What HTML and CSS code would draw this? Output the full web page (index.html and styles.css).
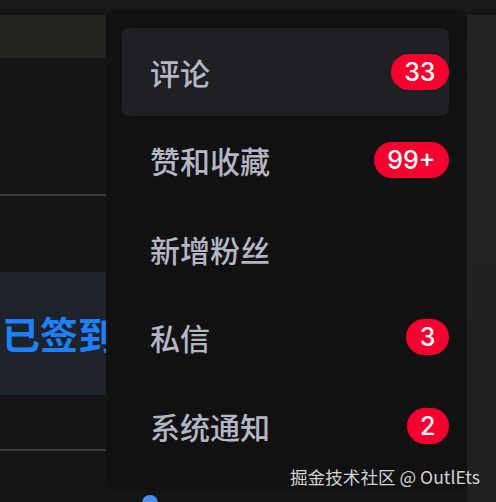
FILE: index.html
```html
<!doctype html>
<html lang="zh-CN">
<head>
    <meta charset="utf-8">
    <title>消息</title>
    <link rel="stylesheet" href="styles.css">
</head>
<body>
    <div class="topbar"></div>
    <div class="main">
        <div class="side">
            <div class="band"></div>
            <div class="rule first"></div>
            <div class="checkin">已签到</div>
            <div class="rule"></div>
        </div>
        <div class="center">
            <span class="dot"></span>
        </div>
        <div class="aside"></div>
    </div>

    <!-- notification dropdown -->
    <ul class="menu">
        <li class="item active"><span>评论</span><b class="badge">33</b></li>
        <li class="item"><span>赞和收藏</span><b class="badge">99+</b></li>
        <li class="item"><span>新增粉丝</span></li>
        <li class="item"><span>私信</span><b class="badge">3</b></li>
        <li class="item"><span>系统通知</span><b class="badge">2</b></li>
    </ul>

    <div class="mark">掘金技术社区 @ OutlEts</div>
</body>
</html>
```

FILE: styles.css
```css
body {
    margin: 0;
    width: 496px;
    height: 502px;
    overflow: hidden;
    background: #141414;
    font-family: "Noto Sans CJK SC", "Noto Sans", sans-serif;
}
.topbar {
    height: 15px;
    background: #171717;
}
.main {
    display: flex;
    height: 487px;
}
.side {
    width: 106px;
    display: flex;
    flex-direction: column;
}
.band {
    height: 43px;
    background: #252320;
}
.rule {
    height: 2px;
    background: #3a3a3a;
    margin-top: 54px;
}
.rule.first {
    margin-top: 136px;
}
/* the label runs on under the dropdown */
.checkin {
    margin-top: 76px;
    width: 140px;
    height: 123px;
    background: #1d2329;
    color: #1e80ff;
    font-size: 38px;
    font-weight: bold;
    line-height: 121px;
    padding-left: 2px;
    white-space: nowrap;
}
.center {
    flex: 1;
    display: flex;
    flex-direction: column;
    justify-content: flex-end;
}
.dot {
    width: 16px;
    height: 16px;
    border-radius: 50%;
    background: #4a8df0;
    margin: 0 0 -9px 36px;
}
.aside {
    width: 29px;
    background: linear-gradient(#222325, #1f2022);
}

.menu {
    position: absolute;
    left: 106px;
    top: 10px;
    width: 327px;
    height: 462px;
    margin: 0;
    padding: 18px 18px 0 16px;
    list-style: none;
    background: #111112;
    border-radius: 8px;
}
.item {
    height: 88.5px;
    display: flex;
    align-items: center;
    justify-content: space-between;
    padding-left: 28px;
    border-radius: 8px;
    color: #b5b6c3;
    font-size: 30px;
    font-weight: 500;
}
.item.active {
    height: 88px;
    background: #1f2023;
}
.badge {
    height: 36px;
    padding: 0 13.5px;
    border-radius: 18px;
    background: #f5002f;
    color: #fff;
    font-family: Inter, "Liberation Sans", sans-serif;
    font-size: 25px;
    font-weight: 500;
    line-height: 36px;
}
.mark {
    position: absolute;
    left: 290px;
    top: 464px;
    color: #d2d2d2;
    font-size: 17.6px;
    white-space: nowrap;
}
```
